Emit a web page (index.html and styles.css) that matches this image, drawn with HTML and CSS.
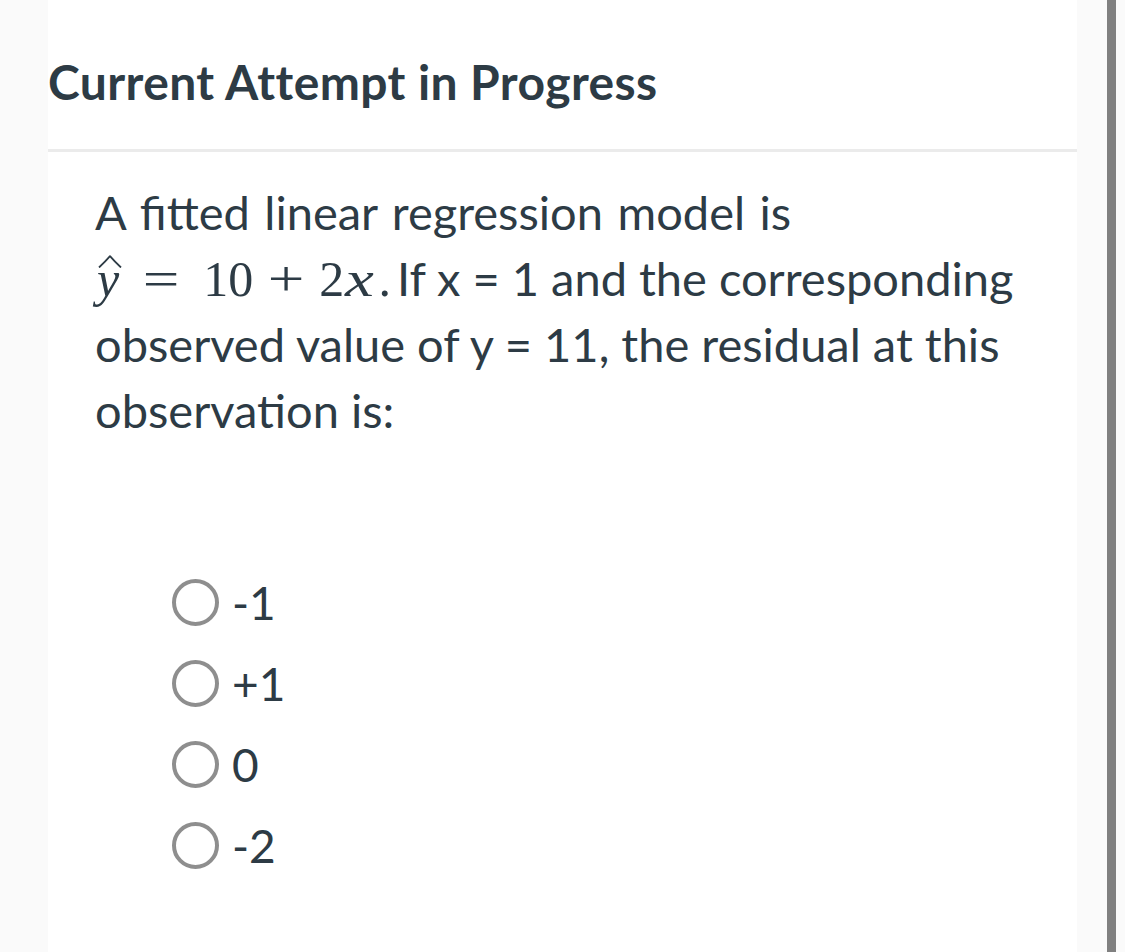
FILE: index.html
```html
<!DOCTYPE html>
<html>
<head>
<meta charset="utf-8">
<link rel="stylesheet" href="styles.css">
</head>
<body>
<div class="page">
  <div class="gutter-left"></div>
  <main class="card">
    <h1 class="title">Current Attempt in Progress</h1>
    <div class="question">
      <p class="stem"><span class="lead">A fitted linear regression model is</span> <span class="math"><span class="hat-wrap"><span class="mi">y</span><svg class="hat" viewBox="0 0 24 13" width="24" height="13"><path d="M1 12.5 Q7 7 12 1.2 Q17 7 23 12.5" fill="none" stroke="#2d3b45" stroke-width="1.8" stroke-linejoin="round"/></svg></span><span class="mo mo-eq"><span class="glyph">=</span></span><span class="mn">10</span><span class="mo mo-plus"><span class="glyph">+</span></span><span class="mn">2</span><span class="mi mi-x">x</span><span class="mp">.</span></span> If x = 1 and the corresponding observed value of y = 11, the residual at this observation is:</p>
      <ul class="options">
        <li class="option"><span class="radio"></span><span class="label">-1</span></li>
        <li class="option"><span class="radio"></span><span class="label">+1</span></li>
        <li class="option"><span class="radio"></span><span class="label">0</span></li>
        <li class="option"><span class="radio"></span><span class="label">-2</span></li>
      </ul>
    </div>
  </main>
  <div class="gutter-right"></div>
  <div class="scrollbar"></div>
  <div class="gutter-end"></div>
</div>
</body>
</html>
```
FILE: styles.css
```css
* { box-sizing: border-box; }
html, body { margin: 0; padding: 0; }
body {
  background: #fafafa;
  font-family: Lato, "Liberation Sans", sans-serif;
  color: #2d3b45;
}
.page {
  display: flex;
  height: 952px;
  overflow: hidden;
}
.gutter-left { width: 48px; flex: none; }
.card {
  width: 1029px;
  flex: none;
  background: #ffffff;
}
.gutter-right { width: 30px; flex: none; }
.scrollbar { width: 9px; flex: none; background: #808080; }
.gutter-end { flex: 1; }

.title {
  margin: 0;
  padding: 54px 0 0 0;
  height: 152px;
  font-size: 48px;
  letter-spacing: 0.4px;
  line-height: 55px;
  font-weight: 700;
  border-bottom: 3px solid #ebebeb;
}
.question {
  padding: 28px 47px 0 47px;
}
.stem {
  margin: 0;
  font-size: 47px;
  line-height: 65.5px;
  width: 935px;
}
.lead { word-spacing: 2.5px; }
.math {
  font-family: "Liberation Serif", "DejaVu Serif", serif;
  font-size: 50px;
  white-space: nowrap;
  margin-right: -6px;
}
.mi { font-style: italic; }
.mi-x {
  display: inline-block;
  transform: scaleX(1.3);
  transform-origin: left center;
  margin-left: 1px;
  margin-right: 7px;
}
.mo {
  display: inline-block;
  text-align: center;
}
.mo .glyph {
  display: inline-block;
  transform: scaleX(1.3);
}
.mo-eq { width: 84px; }
.mo-plus { width: 66px; }
.mp { margin-left: 4px; }
.hat-wrap {
  position: relative;
  display: inline-block;
  margin-left: 2px;
}
.hat {
  position: absolute;
  left: 1px;
  top: 8px;
}
.options {
  list-style: none;
  margin: 0;
  padding: 119px 0 0 77px;
}
.option {
  display: flex;
  align-items: center;
  height: 81px;
  font-size: 46px;
}
.radio {
  width: 47px;
  height: 47px;
  border: 4px solid #8e8e8e;
  border-radius: 50%;
  margin-right: 13px;
  flex: none;
}
```
